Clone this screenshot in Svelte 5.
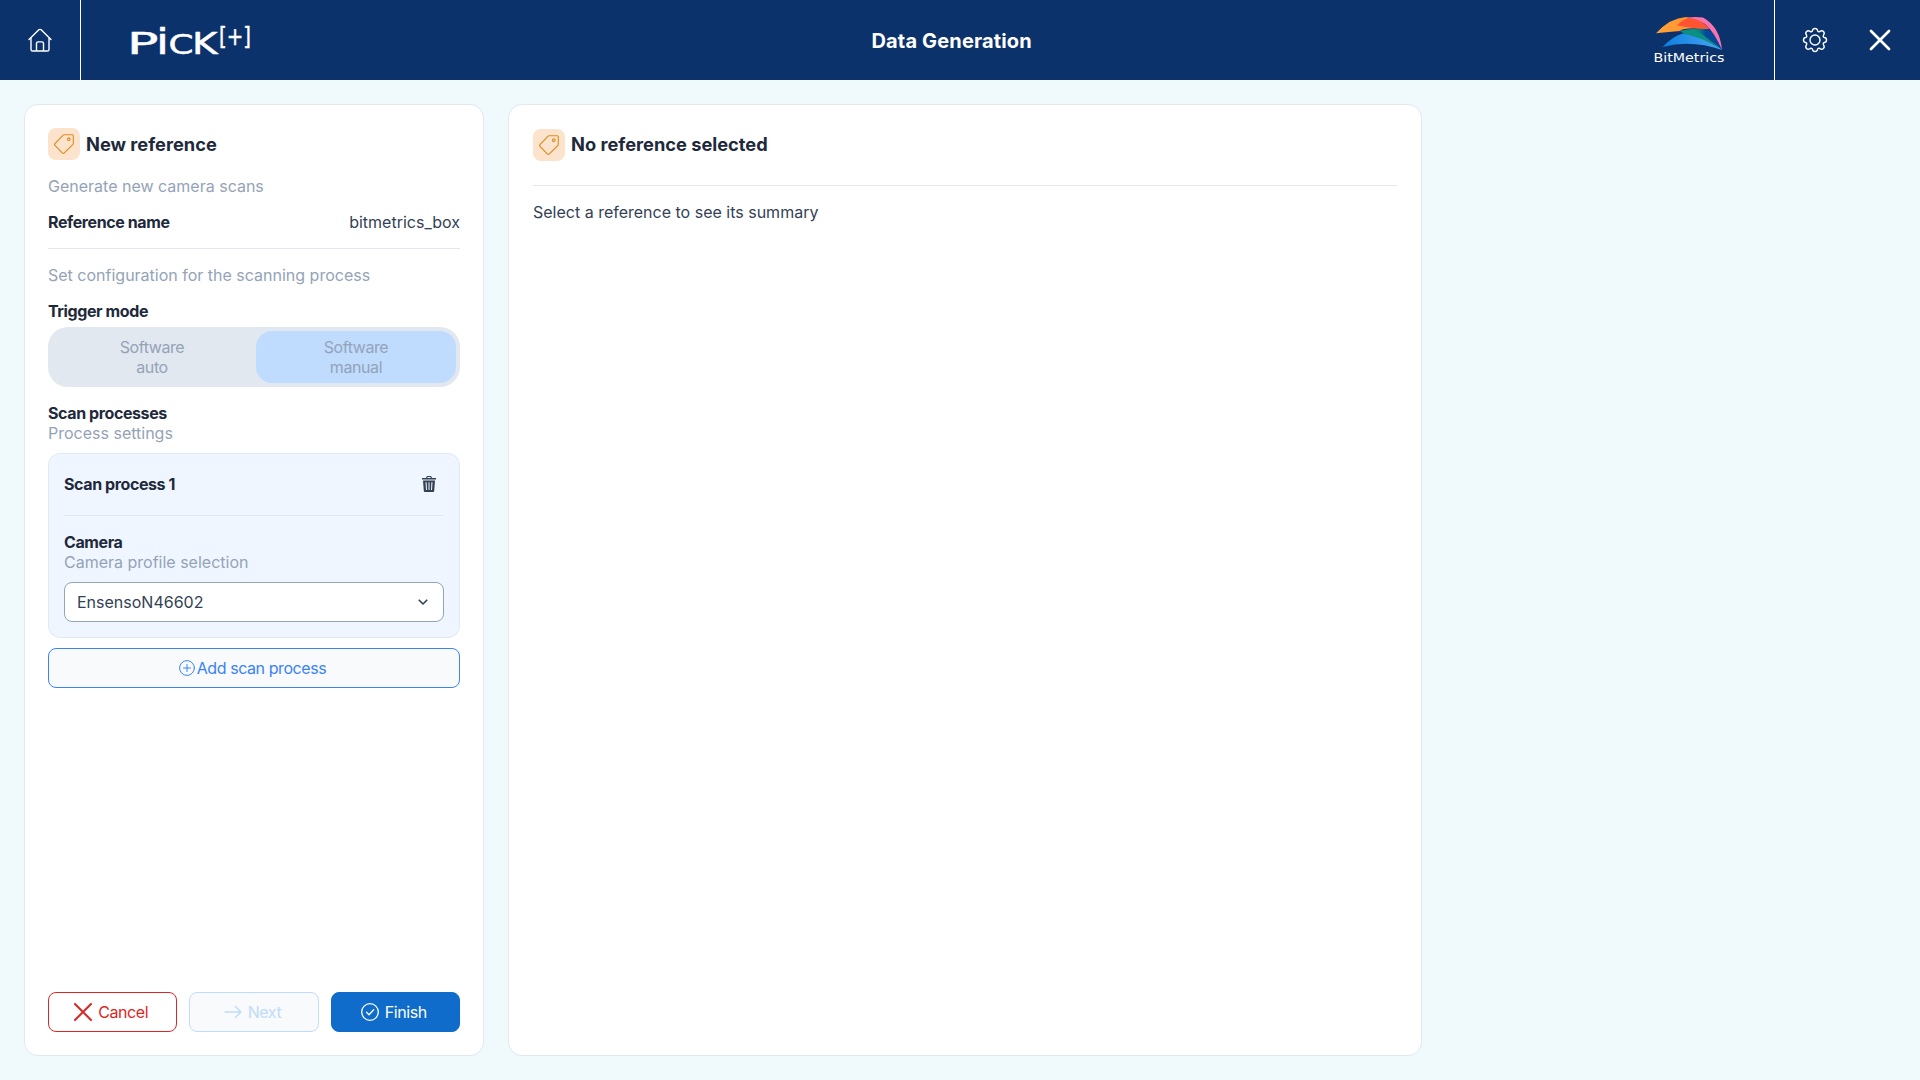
<script>
  const modes = [
    { name: 'Software', kind: 'auto', active: false },
    { name: 'Software', kind: 'manual', active: true },
  ];
</script>

{#snippet tag()}
  <span class="tag">
    <svg width="20" height="20" viewBox="0 0 20 20">
      <path d="M9.9.7H18.3Q19.3.7 19.3 1.7V9.2Q19.3 10 18.7 10.6L10.1 19.1Q9.3 19.7 8.5 19.1L.8 11.2Q.3 10.5.8 9.8L9.1 1.1Q9.4.7 9.9.7Z" />
      <circle cx="14.8" cy="5.2" r="1.3" />
    </svg>
  </span>
{/snippet}

<div class="page">
  <header>
    <button class="home" aria-label="Home">
      <svg width="26" height="26" viewBox="0 0 26 26">
        <path d="M2 12.4 11.6 2.9Q13 1.8 14.4 2.9L24 12.4M4 10.8V22.4Q4 24 5.6 24H20.4Q22 24 22 22.4V10.8M9.5 23.8V16.4Q9.5 14.9 11 14.9H15Q16.5 14.9 16.5 16.4V23.8" />
      </svg>
    </button>
    <svg class="pick" width="150" height="80" viewBox="110 0 150 80">
      <text x="127" y="53.700" textLength="31.500" lengthAdjust="spacingAndGlyphs" font-size="31">P</text>
      <text x="156" y="53.700" textLength="13" lengthAdjust="spacingAndGlyphs" font-size="36">i</text>
      <text x="168.500" y="53.500" textLength="25" lengthAdjust="spacingAndGlyphs" font-size="26">C</text>
      <text x="192" y="53.700" textLength="25.500" lengthAdjust="spacingAndGlyphs" font-size="31">K</text>
      <text x="219" y="44.500" textLength="32" lengthAdjust="spacingAndGlyphs" font-size="25">[+]</text>
    </svg>
    <h1>Data Generation</h1>
    <div class="brand">
      <svg width="78" height="54" viewBox="0 -2 78 54">
        <defs>
          <linearGradient id="amber"><stop offset="0" stop-color="#ffa33c" /><stop offset="1" stop-color="#ff8a24" /></linearGradient>
          <linearGradient id="sky"><stop offset="0" stop-color="#0b7fe0" /><stop offset="1" stop-color="#4aa6f2" /></linearGradient>
          <linearGradient id="deep"><stop offset="0" stop-color="#078a80" /><stop offset=".45" stop-color="#087f84" /><stop offset=".6" stop-color="#05489a" /><stop offset="1" stop-color="#064596" /></linearGradient>
        </defs>
        <path fill="url(#deep)" d="M28 16Q44 12.500 55 14Q65 22 69 35Q51 23 28 16Z" />
        <path fill="url(#sky)" d="M9.500 32Q20 21 30 18.500Q53 20 69 35Q38 24 9.500 32Z" />
        <path fill="#0a8f80" d="M27 16Q35 13.500 42 14.500Q54 22 67 34Q51 23 31 18.800Z" />
        <path fill="url(#amber)" d="M3 18.300Q17 3 33 2Q48 4 56 14Q30 12 27 16Q16 17 3 18.300Z" />
        <path fill="#f973ae" d="M34 3Q40 1.500 50 2.500Q67 12 69 35Q62 18 52 9Q44 4 34 3Z" />
        <path fill="#ff5434" d="M24 10.500Q31 3 37 3Q49 4.500 56 14Q40 14 24 10.500Z" />
        <text x=".5" y="47" textLength="71" lengthAdjust="spacingAndGlyphs">BitMetrics</text>
      </svg>
    </div>
    <div class="tools">
      <svg width="26" height="26" viewBox="0 0 26 26">
        <path d="M10.500 3.500Q10.800 1.500 13 1.500T15.500 3.500Q16 5.400 17.800 4.500Q20 3 21.500 4.600T21.500 8.200Q20.600 10 22.500 10.500Q24.500 10.800 24.500 13T22.500 15.500Q20.600 16 21.500 17.800Q23 20 21.400 21.500T17.800 21.500Q16 20.600 15.500 22.500Q15.200 24.500 13 24.500T10.500 22.500Q10 20.600 8.200 21.500Q6 23 4.500 21.400T4.500 17.800Q5.400 16 3.500 15.500Q1.500 15.200 1.500 13T3.500 10.500Q5.400 10 4.500 8.200Q3 6 4.600 4.500T8.200 4.500Q10 5.400 10.500 3.500Z" />
        <circle cx="13" cy="13" r="5" />
      </svg>
      <svg class="close" width="22" height="22" viewBox="0 0 22 22"><path d="m2 2 18 18M20 2 2 20" /></svg>
    </div>
  </header>

  <main>
    <section class="card form">
      <h2>{@render tag()}<span class="title">New reference</span></h2>
      <p class="hint intro">Generate new camera scans</p>
      <div class="row"><b>Reference name</b><span>bitmetrics_box</span></div>
      <p class="hint config">Set configuration for the scanning process</p>
      <b class="label">Trigger mode</b>
      <div class="toggle">
        {#each modes as mode}
          <button class:active={mode.active} disabled>{mode.name}<br />{mode.kind}</button>
        {/each}
      </div>
      <b class="label scans">Scan processes</b>
      <p class="hint">Process settings</p>
      <div class="process">
        <div class="process-head">
          <b>Scan process 1</b>
          <svg width="14" height="16" viewBox="0 0 14 16">
            <path d="M0 2H4L4.600.4Q4.800 0 5.300 0H8.700Q9.200 0 9.400.4L10 2H14V3.500H0ZM5.200 2H8.800L8.400 1H5.600ZM1 4.500H13L12.200 15Q12.100 16 11.200 16H2.800Q1.900 16 1.800 15ZM3.500 6.200 4 14H5L4.600 6.200ZM6.500 6.200V14H7.500V6.200ZM9.400 6.200 9 14H10L10.500 6.200Z" fill-rule="evenodd" />
          </svg>
        </div>
        <b class="label">Camera</b>
        <p class="hint">Camera profile selection</p>
        <div class="select">
          EnsensoN46602
          <svg width="10" height="7" viewBox="0 0 10 7"><path d="m1.200 1.200 3.800 3.800 3.800-3.800" /></svg>
        </div>
      </div>
      <button class="add">
        <svg width="16" height="16" viewBox="0 0 16 16"><circle cx="8" cy="8" r="7.400" /><path d="M8 4.500v7M4.500 8h7" /></svg>Add scan process
      </button>
      <footer>
        <button class="cancel"><svg width="18" height="18" viewBox="0 0 18 18"><path d="m1 1 16 16M17 1 1 17" /></svg>Cancel</button>
        <button class="next" disabled><svg width="18" height="18" viewBox="0 0 18 18"><path d="M1 9h15.500M11.500 3.500 16.800 9l-5.300 5.500" /></svg>Next</button>
        <button class="finish"><svg width="18" height="18" viewBox="0 0 18 18"><circle cx="9" cy="9" r="8.300" /><path d="m5.500 9.200 2.500 2.500 4.700-5" /></svg>Finish</button>
      </footer>
    </section>
    <section class="card summary">
      <h2>{@render tag()}<span class="title">No reference selected</span></h2>
      <p>Select a reference to see its summary</p>
    </section>
  </main>
</div>

<style>
  :global(body) { margin: 0; }
  .page { height: 1080px; display: flex; flex-direction: column; background: #f0f9fc; color: #334155; font: 16px/20px Inter, sans-serif; }
  .page * { box-sizing: border-box; }
  button { font: inherit; letter-spacing: -.42px; margin: 0; padding: 0; background: none; border: 0; color: inherit; }
  svg { fill: none; stroke: currentColor; stroke-linecap: round; stroke-linejoin: round; flex: none; }
  p, h1, h2 { margin: 0; }
  b { font-weight: 700; color: #1e293b; letter-spacing: -.025em; }
  header { height: 80px; flex: none; display: grid; grid-template-columns: 81px 790.500px auto 1fr 146px; align-items: center; background: #0c326c; color: #fff; }
  .home { height: 80px; border-right: 1px solid #fff; display: grid; place-items: center; }
  .home svg, .tools svg { stroke-width: 1.4; }
  .pick { margin-left: 29px; fill: #fff; font-family: "DejaVu Sans", sans-serif; stroke-width: .5; }
  h1 { font-size: 20px; line-height: 28px; font-weight: 700; letter-spacing: .15px; padding-top: 2px; }
  .brand { display: flex; justify-content: flex-end; padding-right: 43px; }
  .brand svg { stroke: none; }
  .brand text { fill: #fff; font: 12px "DejaVu Sans", sans-serif; }
  .tools { height: 80px; border-left: 1px solid #fff; display: flex; align-items: center; gap: 41px; padding-left: 27px; }
  .tools .close { stroke-width: 2.7; }
  main { flex: 1; display: flex; gap: 24px; padding: 24px; min-height: 0; }
  .card { border: 1px solid #e2e8f0; border-radius: 14px; background: #fff; padding: 23px; display: flex; flex-direction: column; }
  .form { width: 460px; }
  .summary { width: 914px; padding: 24px; }
  h2 { display: flex; align-items: center; gap: 6px; font-size: 18.250px; line-height: 32px; font-weight: 700; color: #1e293b; }
  .tag { width: 32px; height: 32px; border-radius: 8px; background: #fbe4cb; color: #dd8a20; display: grid; place-items: center; }
  .tag svg { stroke-width: 1.100; }
  .title { line-height: 30px; }
  .summary .title { padding-bottom: 2px; }
  .hint { color: #94a3b8; }
  .intro { margin-top: 16px; }
  .row { display: flex; justify-content: space-between; margin-top: 16px; padding-bottom: 16px; border-bottom: 1px solid #e2e8f0; }
  .config { margin: 16px 0; }
  .toggle { display: grid; grid-template-columns: 1fr 1fr; gap: 4px; height: 60px; margin-top: 6px; padding: 4px; border-radius: 20px; background: #e2e8f0; color: #94a3b8; }
  .toggle button { border-radius: 16px; }
  .active { background: #bfdbfe; }
  .scans { margin-top: 16px; }
  .process { height: 185px; margin-top: 10px; padding: 15px; border: 1px solid #e2e8f0; border-radius: 12px; background: #eff6ff; display: flex; flex-direction: column; }
  .process-head { height: 47px; flex: none; display: flex; align-items: center; justify-content: space-between; padding: 0 8px 16px 0; margin-bottom: 16px; border-bottom: 1px solid #e2e8f0; }
  .process-head svg { fill: #334155; stroke: none; }
  .select { height: 40px; margin-top: 10px; padding: 0 15px 0 12px; border: 1px solid #94a3b8; border-radius: 8px; background: #fff; display: flex; align-items: center; justify-content: space-between; }
  .select svg { stroke-width: 1.600; }
  .add { height: 40px; flex: none; margin-top: 10px; padding-right: 3px; border: 1px solid #3b82f6; border-radius: 8px; background: #f8fafc; color: #3b82f6; display: flex; align-items: center; justify-content: center; gap: 2px; }
  footer { margin-top: auto; display: grid; grid-template-columns: repeat(3, 1fr); gap: 12px; }
  footer button { height: 40px; padding-right: 3px; display: flex; align-items: center; justify-content: center; gap: 6px; border-radius: 8px; border: 1px solid; }
  .cancel { color: #dc2626; }
  .cancel svg { stroke-width: 2; }
  .next { color: #bfdbfe; background: #f8fafc; }
  .next svg { stroke-width: 1.400; }
  .finish { color: #fff; background: #0f6ccb; border-color: #0f6ccb; }
  .finish svg { stroke-width: 1.300; }
  .summary h2 { padding-bottom: 24px; border-bottom: 1px solid #e2e8f0; }
  .summary p { margin-top: 16px; }
</style>
